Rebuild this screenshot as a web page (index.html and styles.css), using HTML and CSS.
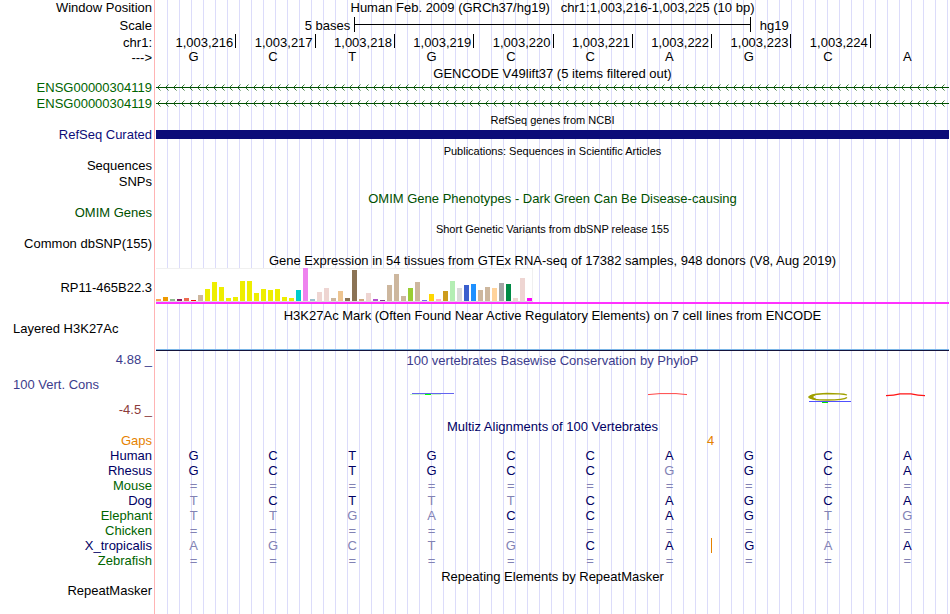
FILE: index.html
```html
<!DOCTYPE html>
<html lang="en">
<head>
    <meta charset="UTF-8">
    <meta name="viewport" content="width=device-width, initial-scale=1.0">
    <title>Human chr1:1,003,216-1,003,225</title>
    <link rel="stylesheet" href="styles.css">
</head>
<body>
    <main class="browser">
        <!-- position, scale and ruler -->
        <div class="row row-position">
            <div class="label">Window Position</div>
            <div class="title">Human Feb. 2009 (GRCh37/hg19) &nbsp; chr1:1,003,216-1,003,225 (10 bp)</div>
        </div>
        <div class="row row-scale">
            <div class="label">Scale</div>
            <div class="scale">
                <span class="scale-size">5 bases</span>
                <span class="scale-bar"></span>
                <span class="scale-db">hg19</span>
            </div>
        </div>
        <div class="row row-ruler">
            <div class="label">chr1:</div>
            <div class="ruler" id="ruler"></div>
        </div>
        <div class="row">
            <div class="label">---&gt;</div>
            <div class="bases" id="bases"></div>
        </div>

        <!-- genes -->
        <section class="track genes">
            <h2 class="title">GENCODE V49lift37 (5 items filtered out)</h2>
            <div class="row">
                <div class="label">ENSG00000304119</div>
                <svg class="intron" width="100%" height="16">
                    <defs>
                        <pattern id="arrows" width="8" height="16" patternUnits="userSpaceOnUse">
                            <path d="M0 7.5H8" fill="none" stroke="#005000"/>
                            <path d="M4.5 4.5L1.5 7.5L4.5 10.5" fill="none" stroke="#005000" stroke-width="0.8"/>
                        </pattern>
                    </defs>
                    <rect width="100%" height="16" fill="url(#arrows)"/>
                </svg>
            </div>
            <div class="row">
                <div class="label">ENSG00000304119</div>
                <svg class="intron" width="100%" height="16">
                    <rect width="100%" height="16" fill="url(#arrows)"/>
                </svg>
            </div>
        </section>

        <section class="track refseq">
            <h2 class="title small">RefSeq genes from NCBI</h2>
            <div class="row">
                <div class="label">RefSeq Curated</div>
                <div class="exon"></div>
            </div>
        </section>

        <section class="track">
            <h2 class="title small">Publications: Sequences in Scientific Articles</h2>
            <div class="row"><div class="label">Sequences</div></div>
            <div class="row"><div class="label">SNPs</div></div>
        </section>

        <section class="track omim">
            <h2 class="title">OMIM Gene Phenotypes - Dark Green Can Be Disease-causing</h2>
            <div class="row"><div class="label">OMIM Genes</div></div>
        </section>

        <section class="track">
            <h2 class="title small">Short Genetic Variants from dbSNP release 155</h2>
            <div class="row"><div class="label">Common dbSNP(155)</div></div>
        </section>

        <!-- expression -->
        <section class="track">
            <h2 class="title">Gene Expression in 54 tissues from GTEx RNA-seq of 17382 samples, 948 donors (V8, Aug 2019)</h2>
            <div class="row row-gtex">
                <div class="label">RP11-465B22.3</div>
                <div class="gtex">
                    <div class="gtex-bars" id="gtex"></div>
                </div>
            </div>
        </section>

        <section class="track">
            <h2 class="title">H3K27Ac Mark (Often Found Near Active Regulatory Elements) on 7 cell lines from ENCODE</h2>
            <div class="row row-h3k">
                <div class="label label-left">Layered H3K27Ac</div>
                <div class="signal"></div>
            </div>
        </section>

        <!-- conservation -->
        <section class="row phylop">
            <div class="axis">
                <div class="label">4.88 _</div>
                <div class="label label-left">100 Vert. Cons</div>
                <div class="label axis-min">-4.5 _</div>
            </div>
            <div>
                <h2 class="title title-inner">100 vertebrates Basewise Conservation by PhyloP</h2>
                <svg class="logo" viewBox="0 0 793 50" preserveAspectRatio="none" fill="none">
                    <path d="M256 26.5H298" stroke="#6464f0"/>
                    <path d="M254 27.5H285" stroke="#c8f5c8"/>
                    <path d="M269 27.5H275" stroke="#00ff00"/>
                    <path d="M492 27.6L504 26.6H520L531 27.6" stroke="#ff4646"/>
                    <path d="M691 28Q686 26.5 671 26.5Q654 27 654 30Q654 33 671 33Q688 33 691 30.5" stroke="#a0a000" stroke-width="1.3"/>
                    <path d="M652 30Q653 27.5 661 27L657 30L662 33Q653 32.5 652 30Z" fill="#a0a000"/>
                    <path d="M653 34.5H695" stroke="#5050ff"/>
                    <path d="M666 35.5H672" stroke="#00e600"/>
                    <path d="M730 28.6Q738 28.5 744 26.8H755Q762 28.5 769 28.6" stroke="#ff1414" stroke-width="1.2"/>
                </svg>
            </div>
        </section>

        <section class="multiz">
            <h2 class="title">Multiz Alignments of 100 Vertebrates</h2>
            <table class="alignment">
                <tbody id="alignment"></tbody>
            </table>
        </section>

        <section class="track">
            <h2 class="title">Repeating Elements by RepeatMasker</h2>
            <div class="row"><div class="label">RepeatMasker</div></div>
        </section>
    </main>

    <script src="script.js"></script>
</body>
</html>
```

FILE: styles.css
```css
body {
    margin: 0;
    background: #ffffff;
    color: #000000;
    font-family: "Liberation Sans", Arial, Helvetica, sans-serif;
    font-size: 13px;
    line-height: 14px;
}
.browser {
    box-sizing: border-box;
    min-height: 100vh;
    padding-right: 1px;
    /* label column with its red edge, then a guide line every 12px */
    background:
        linear-gradient(to right, #ffffff 154px, #ffb4b4 154px, #ffb4b4 155px, #ffffff 155px, #ffffff 156px, transparent 156px),
        repeating-linear-gradient(to right, transparent 0, transparent 11px, #dcdcfa 11px, #dcdcfa 12px);
}
.row {
    display: grid;
    grid-template-columns: 156px minmax(0, 1fr);
    line-height: 16px;
}
.label {
    padding-right: 4px;
    text-align: right;
    white-space: nowrap;
}
.label-left {
    padding-left: 13px;
    text-align: left;
}
.title {
    height: 14px;
    margin: 0 0 0 156px;
    font-size: 13px;
    font-weight: normal;
    line-height: 16px;
    text-align: center;
    white-space: nowrap;
}
.small {
    font-size: 11px;
    line-height: 14px;
}
.row-position .title,
.title-inner {
    margin-left: 0;
}
.track {
    margin-bottom: 1px;
}

/* scale and ruler */
.row-position {
    height: 17px;
}
.row-scale {
    line-height: 17px;
}
.row-ruler {
    height: 16px;
    line-height: 17px;
}
.scale {
    display: grid;
    grid-template-columns: 1fr 2fr 1fr;
}
.scale-size {
    padding-right: 4px;
    text-align: right;
}
.scale-bar {
    height: 15px;
    border: solid #000000;
    border-width: 0 1px;
    background: linear-gradient(#000000, #000000) 0 7px / 100% 1px no-repeat;
}
.scale-db {
    padding-left: 9px;
}
.ruler,
.bases {
    display: grid;
    grid-template-columns: repeat(10, minmax(0, 1fr));
}
.ruler span {
    height: 14px;
    padding-right: 2px;
    text-align: right;
}
.ruler span + span {
    border-left: 1px solid #000000;
}
.bases span {
    padding-right: 4px;
    line-height: 14px;
    text-align: center;
}

/* gene tracks */
.genes .label {
    color: #006400;
}
.intron {
    display: block;
}
.refseq .label {
    color: #0c0c78;
}
.exon {
    height: 9px;
    margin-top: 3px;
    background: #0c0c78;
}
.omim {
    color: #005000;
}

/* GTEx bars */
.row-gtex {
    height: 40px;
    line-height: 42px;
}
.gtex {
    box-sizing: border-box;
    height: 37px;
    padding-top: 1px;
    border-bottom: 2px solid #ff32ff;
}
.gtex-bars {
    display: flex;
    align-items: flex-end;
    gap: 2px;
    box-sizing: border-box;
    width: 377px;
    height: 34px;
    border-bottom: 1px solid #dcdcdc;
    background: #ffffff;
    box-shadow: inset 0 1px #f0f0f0, inset -1px 0 #f0f0f0;
}
.bar {
    width: 5px;
}

/* signal tracks */
.row-h3k {
    min-height: 30px;
    line-height: 14px;
}
.signal {
    align-self: end;
    height: 1px;
    border-top: 1px solid #78b4e6;
    background: #14143c;
    margin-bottom: 1px;
}
.phylop {
    margin-bottom: 2px;
    color: #3c3c8c;
    line-height: 14px;
}
.axis {
    display: flex;
    flex-direction: column;
    justify-content: space-between;
}
.axis-min {
    color: #8c3c3c;
}
.logo {
    display: block;
    width: 100%;
    height: 50px;
}

/* alignment */
.multiz {
    margin-bottom: 1px;
    color: #000064;
}
.alignment {
    width: 100%;
    table-layout: fixed;
    border-spacing: 0;
}
.alignment th,
.alignment td {
    height: 15px;
    padding: 0 4px 0 0;
    font-weight: normal;
    line-height: 15px;
    text-align: center;
}
.alignment th {
    width: 152px;
    text-align: right;
}
.alignment .net th {
    color: #006400;
}
.alignment .gaps {
    color: #e68200;
}
.alignment .gaps td {
    padding-right: 1px;
}
.alignment .diff {
    color: #8282b4;
}
.alignment .insert {
    border-left: 1px solid #e68200;
}
```

FILE: script.js
```javascript
const start = 1003216;
const sequence = 'GCTGCCAGCA';

// species, bases, green label
const species = [
    ['Human', 'GCTGCCAGCA', false],
    ['Rhesus', 'GCTGCCGGCA', false],
    ['Mouse', '==========', true],
    ['Dog', 'TCTTTCAGCA', false],
    ['Elephant', 'TTGACCAGTG', true],
    ['Chicken', '==========', true],
    ['X_tropicalis', 'AGCTGCAGAA', false],
    ['Zebrafish', '==========', true],
];

// bar height and tissue color
const tissues = [
    [2, '#ffa54f'], [4, '#ee9a00'], [2, '#8fbc8f'], [2, '#8b1c62'], [3, '#ee6a50'], [1, '#ff0000'],
    [6, '#cdb79e'], [12, '#eeee00'], [19, '#eeee00'], [14, '#eeee00'], [3, '#eeee00'], [4, '#eeee00'],
    [20, '#eeee00'], [20, '#eeee00'], [8, '#eeee00'], [12, '#eeee00'], [11, '#eeee00'], [12, '#eeee00'],
    [4, '#eeee00'], [3, '#eeee00'], [11, '#00cdcd'], [33, '#ee82ee'], [2, '#9ac0cd'], [9, '#eed5d2'],
    [13, '#eed5d2'], [3, '#cdb79e'], [10, '#eec591'], [3, '#8b7355'], [31, '#8b7355'], [2, '#cdaa7d'],
    [8, '#eed5d2'], [2, '#b452cd'], [1, '#7a378b'], [16, '#cdb79e'], [27, '#cdb79e'], [5, '#cdb79e'],
    [13, '#9acd32'], [19, '#cdb79e'], [1, '#7a67ee'], [7, '#ffd700'], [2, '#ffb6c1'], [10, '#cd9b1d'],
    [20, '#b4eeb4'], [13, '#d9d9d9'], [16, '#3a5fcd'], [17, '#1e90ff'], [11, '#cdb79e'], [14, '#cdb79e'],
    [13, '#ffd39b'], [18, '#a6a6a6'], [17, '#008b45'], [3, '#eed5d2'], [23, '#eed5d2'], [3, '#ff00ff'],
];

const ruler = document.getElementById('ruler');
const bases = document.getElementById('bases');
[...sequence].forEach((base, i) => {
    const tick = document.createElement('span');
    // the last base has no tick on its right
    tick.textContent = i < 9 ? (start + i).toLocaleString('en-US') : '';
    ruler.appendChild(tick);

    const letter = document.createElement('span');
    letter.textContent = base;
    bases.appendChild(letter);
});

const gtex = document.getElementById('gtex');
tissues.forEach(([height, color]) => {
    const bar = document.createElement('div');
    bar.className = 'bar';
    bar.style.height = height + 'px';
    bar.style.background = color;
    gtex.appendChild(bar);
});

const alignment = document.getElementById('alignment');
alignment.innerHTML = '<tr class="gaps"><th scope="row">Gaps</th><td></td><td></td><td></td>' +
    '<td></td><td></td><td></td><td colspan="2">4</td><td></td><td></td></tr>';
species.forEach(([name, seq, net]) => {
    const row = alignment.insertRow();
    if (net) row.className = 'net';
    row.innerHTML = `<th scope="row">${name}</th>`;
    [...seq].forEach((base, i) => {
        const cell = row.insertCell();
        cell.textContent = base;
        if (base !== sequence[i]) cell.classList.add('diff');
        // bases inserted before this one
        if (name === 'X_tropicalis' && i === 7) cell.classList.add('insert');
    });
});
```
